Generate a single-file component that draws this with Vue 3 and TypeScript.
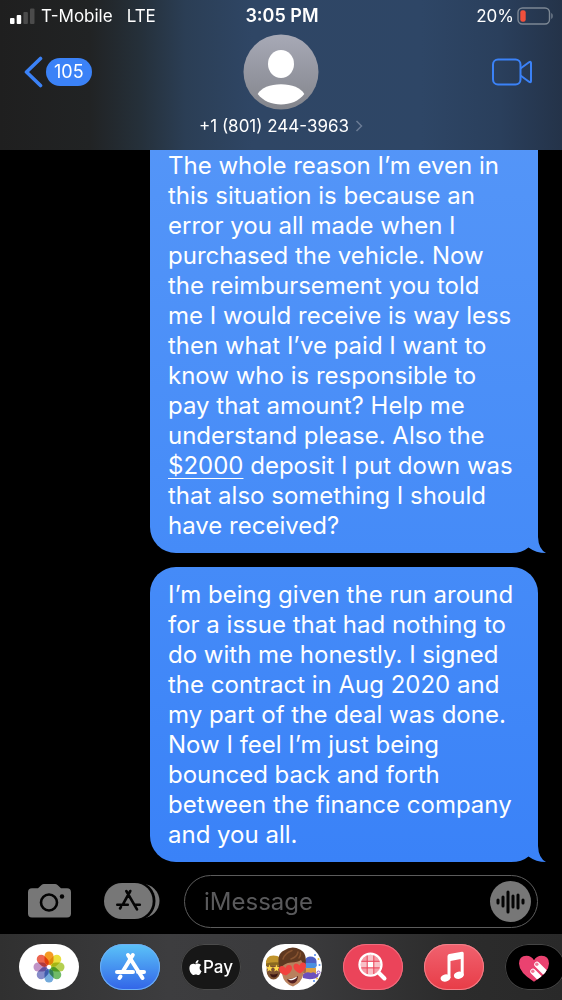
<script setup lang="ts">
import { ref } from 'vue'

interface Message {
  id: number
  before: string
  link?: string
  after?: string
}

const draft = ref('')

const messages: Message[] = [
  {
    id: 1,
    before:
      'The whole reason I’m even in\nthis situation is because an\nerror you all made when I\npurchased the vehicle. Now\nthe reimbursement you told\nme I would receive is way less\nthen what I’ve paid I want to\nknow who is responsible to\npay that amount? Help me\nunderstand please. Also the\n',
    link: '$2000',
    after: ' deposit I put down was\nthat also something I should\nhave received?',
  },
  {
    id: 2,
    before:
      'I’m being given the run around\nfor a issue that had nothing to\ndo with me honestly. I signed\nthe contract in Aug 2020 and\nmy part of the deal was done.\nNow I feel I’m just being\nbounced back and forth\nbetween the finance company\nand you all.',
  },
]

const petals = [
  { angle: 0, color: '#f59a23' },
  { angle: 45, color: '#ebdf3c' },
  { angle: 90, color: '#b4cf50' },
  { angle: 135, color: '#70bb68' },
  { angle: 180, color: '#73aadb' },
  { angle: 225, color: '#858bc9' },
  { angle: 270, color: '#c093c6' },
  { angle: 315, color: '#ec6550' },
]

const waveBars = [
  { x: 8, top: 19, bottom: 22 },
  { x: 13, top: 16, bottom: 25 },
  { x: 18, top: 11, bottom: 31 },
  { x: 23, top: 15, bottom: 26 },
  { x: 28, top: 14, bottom: 27 },
  { x: 33, top: 19, bottom: 22 },
]
</script>

<template>
  <div class="phone">
    <header class="top">
      <div class="status">
        <div class="carrier">
          <svg class="signal" width="25" height="16" viewBox="0 0 25 16" aria-hidden="true">
            <rect x="0" y="10" width="4.5" height="6" rx="1" fill="#fff" />
            <rect x="6.7" y="7" width="4.5" height="9" rx="1" fill="#fff" />
            <rect x="13.4" y="4" width="4.5" height="12" rx="1" fill="#4b4b4b" />
            <rect x="20" y="0.5" width="4.5" height="15.5" rx="1" fill="#4b4b4b" />
          </svg>
          <span>T-Mobile</span>
          <span class="network">LTE</span>
        </div>
        <span class="clock">3:05 PM</span>
        <div class="power">
          <span>20%</span>
          <svg width="37" height="18" viewBox="0 0 37 18" aria-hidden="true">
            <rect x="1" y="1" width="31.5" height="16" rx="4.5" fill="none" stroke="#7c8794" stroke-width="1.4" />
            <rect x="3.3" y="3.2" width="5.4" height="11.6" rx="2.2" fill="#f0503c" />
            <path d="M34.3 6v6c1.8-.6 1.8-5.4 0-6z" fill="#7c8794" />
          </svg>
        </div>
      </div>
      <nav class="nav">
        <button class="back" type="button" aria-label="Back, 105 unread">
          <svg width="20" height="32" viewBox="0 0 20 32" aria-hidden="true">
            <path d="M16.5 2.500 2.500 16l14 13.500" fill="none" stroke="#3b82f7" stroke-width="3.600" stroke-linecap="round" stroke-linejoin="round" />
          </svg>
          <span class="badge">105</span>
        </button>
        <button class="contact" type="button">
          <svg width="76" height="76" viewBox="0 0 76 76" aria-hidden="true">
            <defs>
              <linearGradient id="avatar-fill" x1="0" y1="0" x2="0" y2="1">
                <stop offset="0" stop-color="#a7a9b6" />
                <stop offset="1" stop-color="#83858c" />
              </linearGradient>
            </defs>
            <circle cx="38" cy="38" r="37.500" fill="url(#avatar-fill)" />
            <ellipse cx="38" cy="30" rx="13" ry="14" fill="#fff" />
            <path d="M14.700 60C18 54 27 50.300 38 50.300S58 54 61.300 60C56 67 47 70.500 38 70.500S20 67 14.700 60z" fill="#fff" />
          </svg>
          <span class="number">
            +1 (801) 244-3963
            <svg width="8" height="12" viewBox="0 0 8 12" aria-hidden="true">
              <path d="M1.500 1l5 5-5 5" fill="none" stroke="#6b7c95" stroke-width="1.500" />
            </svg>
          </span>
        </button>
        <button class="video" type="button" aria-label="Video call">
          <svg width="42" height="28" viewBox="0 0 42 28" fill="none" stroke="#3b82f7" stroke-width="2" stroke-linejoin="round" aria-hidden="true">
            <rect x="1" y="1.500" width="27.500" height="25" rx="5" />
            <path d="M28.500 10.500 37 4.300Q39 3 39 5v18q0 2-2 .700l-8.500-6.200" />
          </svg>
        </button>
      </nav>
    </header>

    <main class="thread">
      <article v-for="message in messages" :key="message.id" class="bubble">
        <p>{{ message.before }}<a v-if="message.link" href="#payment">{{ message.link }}</a>{{ message.after }}</p>
        <svg class="tail" width="36" height="16" viewBox="0 0 36 16" aria-hidden="true">
          <path d="M27 0Q27.500 12 35 16H27z" class="tail-fill" />
          <path d="M0 16Q11 16 17.500 10.500 25 16 35 16z" fill="#000" />
        </svg>
      </article>
    </main>

    <form class="composer" @submit.prevent>
      <button type="button" class="camera" aria-label="Camera">
        <svg width="44" height="34" viewBox="0 0 44 34" aria-hidden="true">
          <path d="M4 4.300h6L13.500 1Q14.500 0 16 0h11q1.500 0 2.500 1L33 4.300h6q4 0 4 4V29.500q0 4-4 4H4q-4 0-4-4V8.300q0-4 4-4z" fill="#777" />
          <circle cx="21" cy="18.500" r="8" fill="none" stroke="#030303" stroke-width="2.600" />
          <circle cx="34" cy="12.500" r="2.200" fill="#030303" />
        </svg>
      </button>
      <button type="button" class="apps" aria-label="Apps">
        <svg width="57" height="36" viewBox="0 0 57 36" aria-hidden="true">
          <rect x="7" y="1" width="48.500" height="34" rx="17" fill="#777" />
          <rect x="-2" y="-2" width="53.500" height="40" rx="20" fill="#020202" />
          <rect x="0" y="0" width="48.700" height="36" rx="18" fill="#777" />
          <g stroke="#050505" stroke-width="2.600" stroke-linecap="round">
            <path d="M22.300 8 33 26.300M26.300 8l-7 12.700M17 23.800l-1 1.700M13.300 21.700h10.500M31 21.700h4.800" />
          </g>
        </svg>
      </button>
      <div class="field">
        <input v-model="draft" type="text" placeholder="iMessage" aria-label="iMessage" />
        <button type="button" class="record" aria-label="Record audio">
          <svg width="41" height="41" viewBox="0 0 41 41" aria-hidden="true">
            <circle cx="20.500" cy="20.500" r="20.500" fill="#777" />
            <path v-for="bar in waveBars" :key="bar.x" :d="`M${bar.x} ${bar.top}V${bar.bottom}`" stroke="#050505" stroke-width="3" stroke-linecap="round" />
          </svg>
        </button>
      </div>
    </form>

    <footer class="drawer">
      <button type="button" class="pill photos" aria-label="Photos">
        <svg viewBox="0 0 60 46" aria-hidden="true">
          <g class="petals">
            <rect v-for="petal in petals" :key="petal.angle" x="25.500" y="7.500" width="9" height="13.500" rx="4.500" :fill="petal.color" :transform="`rotate(${petal.angle} 30 23)`" />
          </g>
        </svg>
      </button>
      <button type="button" class="pill store" aria-label="App Store">
        <svg viewBox="0 0 60 46" aria-hidden="true">
          <g stroke="#fff" stroke-width="4" stroke-linecap="round">
            <path d="M28 11 42.500 34M32.800 11 22.500 28M20.500 32.500l-1 1.500M17 28h16M38 28h6" />
          </g>
        </svg>
      </button>
      <button type="button" class="pill pay" aria-label="Apple Pay">
        <svg class="apple" width="13" height="15" viewBox="2 0 20 24" fill="#fff" aria-hidden="true">
          <path d="M12.152 6.896c-.948 0-2.415-1.078-3.960-1.040-2.040.027-3.910 1.183-4.961 3.014-2.117 3.675-.546 9.103 1.519 12.090 1.013 1.454 2.208 3.090 3.792 3.039 1.520-.065 2.090-.987 3.935-.987 1.831 0 2.350.987 3.960.948 1.637-.026 2.676-1.480 3.676-2.948 1.156-1.688 1.636-3.325 1.662-3.415-.039-.013-3.182-1.221-3.220-4.857-.026-3.040 2.480-4.494 2.597-4.559-1.429-2.090-3.623-2.324-4.390-2.376-2-.156-3.675 1.090-4.610 1.090zM15.530 3.830c.843-1.012 1.400-2.427 1.245-3.830-1.207.052-2.662.805-3.532 1.818-.780.896-1.454 2.338-1.273 3.714 1.338.104 2.715-.688 3.559-1.701" />
        </svg>
        <span>Pay</span>
      </button>
      <button type="button" class="pill memoji" aria-label="Memoji stickers">
        <svg viewBox="0 0 60 46" aria-hidden="true">
          <ellipse cx="11.500" cy="26" rx="7" ry="9.500" fill="#7b5132" />
          <path d="M4 21Q3 11.500 11.500 11.500T20 19v3z" fill="#c0942c" />
          <path d="M4 19.500q7-2 15-1v3q-8-1-15 1z" fill="#8a6920" />
          <path d="m7.500 20.500 1 2.500 2.500.3-2 1.700.6 2.500-2.100-1.300-2.200 1.300.6-2.500-2-1.700 2.600-.3zM14.500 20.500l1 2.500 2.500.3-2 1.700.6 2.500-2.100-1.300-2.200 1.300.6-2.500-2-1.700 2.600-.3z" fill="#ffd94a" />
          <path d="M8 30q4 1 8-.5-1 4-4 4t-4-3.500z" fill="#3b1713" />
          <path d="M43 17q0-4 5-4.500 6 0 6.500 4.500v5H43z" fill="#4d5fc4" />
          <rect x="42" y="19" width="12.500" height="5" rx="2" fill="#4a90e0" />
          <path d="M43 24h11v7H43z" fill="#dda040" />
          <path d="M41 30q4-3 8-1 3-2 5 1 2 1 2.500-1.500 1 5-3.500 6-6 1.500-12-.5z" fill="#6c50bd" />
          <circle cx="56.500" cy="28.500" r="1.500" fill="none" stroke="#8a57c7" />
          <g fill="#4b89eb">
            <circle cx="53" cy="11" r="1" />
            <circle cx="57.500" cy="21" r="1" />
            <circle cx="52" cy="37" r="1" />
          </g>
          <g fill="#f5ca3d">
            <circle cx="56.500" cy="15" r="1" />
            <circle cx="55" cy="34.500" r="1" />
          </g>
          <ellipse cx="19.500" cy="26" rx="2" ry="3.500" fill="#a5694a" />
          <ellipse cx="42" cy="26" rx="2" ry="3.500" fill="#a5694a" />
          <path d="M20 15h21.500v15q-2 9-10.500 12.500Q22 40 20 30z" fill="#b9805d" />
          <path d="M17.500 24Q14 10 22 6.500 30 1 38 5.500q8 4 5 17.500h-1.500q0-4-2.500-7-3 2-10 2.500-7 .5-10 5.500z" fill="#5f3820" />
          <path d="M21 15q2-6 9-8.500M29 15q6-2 7-7M37 14q2-2 1.500-5" fill="none" stroke="#85522f" stroke-width="1.500" stroke-linecap="round" />
          <path d="M24 31.500q-6.500-1.800-7-6-.2-3.500 3-3.500 2 0 3.500 2 1-3.500 4-3 3.200.8 2.300 4.500-1 3.300-5.800 6zM38 29.500q-5.500-2.200-6.500-6.200-.3-3.300 2.500-3.800 2 0 3.500 2 1-3.300 4-3 3.300.9 2.300 4.500-1 3.300-5.800 6.500z" fill="#f2423f" />
          <path d="M25 35.500q6-.5 11-3.500-.5 7-5 7.500-4 0-6-4z" fill="#542021" />
          <path d="M26 35.600q5-.6 9-3-.5 2.500-4 3.400t-5-.4z" fill="#fff" />
        </svg>
      </button>
      <button type="button" class="pill images" aria-label="#images">
        <svg viewBox="0 0 60 46" aria-hidden="true">
          <defs><clipPath id="lens"><circle cx="27.500" cy="20.700" r="10" /></clipPath></defs>
          <g clip-path="url(#lens)">
            <rect x="17" y="10" width="21" height="22" fill="#f59aa5" />
            <path d="M24.500 10h6v7h-6zM17 17.500h7v6h-7zM31 17.500h7v6h-7zM24.500 24h6v8h-6z" fill="#f8c0c7" />
            <path d="M24.500 17.500h6v6h-6z" fill="#fff" />
            <path d="M24.200 10v22M30.800 10v22M17 17.300h21M17 23.900h21" stroke="#eb445a" stroke-width="1" />
          </g>
          <circle cx="27.500" cy="20.700" r="11" fill="none" stroke="#fff" stroke-width="2.300" />
          <path d="m36 29 5.500 5.500" stroke="#fff" stroke-width="4" stroke-linecap="round" />
        </svg>
      </button>
      <button type="button" class="pill music" aria-label="Music">
        <svg viewBox="0 0 60 46" fill="#fff" aria-hidden="true">
          <path d="M23.500 12.300q0-1.800 1.800-2.200L38 7.800q1.700-.3 1.700 1.500V31.500h-3V15l-10.200 2V34h-3z" />
          <ellipse cx="21.500" cy="34" rx="5" ry="3.600" transform="rotate(-12 21.500 34)" />
          <ellipse cx="34.800" cy="31.300" rx="5" ry="3.600" transform="rotate(-12 34.800 31.300)" />
        </svg>
      </button>
      <button type="button" class="pill touch" aria-label="Digital Touch">
        <svg viewBox="0 0 60 46" aria-hidden="true">
          <defs>
            <clipPath id="heart"><path d="M29 37.700Q14 28.500 14 19.500 14 11.700 21.500 11.700q5 0 7.500 4.500 2.500-4.500 7.500-4.500 7.500 0 7.500 7.800 0 9-15 18.200z" /></clipPath>
          </defs>
          <g clip-path="url(#heart)">
            <rect x="12" y="10" width="34" height="30" fill="#ea4270" />
            <path d="m32 20.500 14 14M28 27.500l12 12" stroke="#fff" stroke-width="5.500" stroke-linecap="round" />
            <circle cx="31.800" cy="20.300" r="1.700" fill="#f17897" />
            <circle cx="27.800" cy="27.300" r="1.700" fill="#f17897" />
          </g>
        </svg>
      </button>
    </footer>
  </div>
</template>

<style>
body {
  margin: 0;
  background: #000;
}
</style>

<style scoped>
.phone {
  display: flex;
  flex-direction: column;
  height: 100vh;
  overflow: hidden;
  background: #000;
  color: #fff;
  font-family: Inter, "Liberation Sans", sans-serif;
}

button {
  padding: 0;
  border: 0;
  background: none;
  color: inherit;
  font: inherit;
}

svg {
  display: block;
}

.top {
  flex: none;
  height: 150px;
  background: linear-gradient(90deg, #1f1f1f 0%, #212324 16%, #25303a 25%, #2b3e55 33%, #2f4665 45%, #2e4666 75%, #2a3f5c 89%, #243349 100%);
}

.status {
  display: grid;
  grid-template-columns: 1fr auto 1fr;
  align-items: center;
  height: 32px;
  padding: 0 8px 0 10px;
  font-size: 17px;
  line-height: 20px;
}

.carrier,
.power {
  display: flex;
  align-items: center;
}

.signal {
  margin-right: 6px;
}

.network {
  margin-left: 14px;
}

.clock {
  font-size: 18px;
  font-weight: 600;
}

.power {
  justify-content: flex-end;
  gap: 3px;
}

.nav {
  display: grid;
  grid-template-columns: 1fr auto 1fr;
  align-items: start;
  padding: 2px 24px 0;
}

.back {
  display: flex;
  align-items: center;
  justify-self: start;
  gap: 2px;
  margin-top: 22px;
}

.badge {
  padding: 0 8px;
  border-radius: 14px;
  background: #3b82f7;
  font-size: 18px;
  line-height: 28px;
}

.contact {
  display: flex;
  flex-direction: column;
  align-items: center;
  gap: 6px;
}

.number {
  display: flex;
  align-items: center;
  gap: 6px;
  font-size: 17px;
  line-height: 20px;
}

.video {
  justify-self: end;
  margin: 24px 4px 0 0;
}

.thread {
  display: flex;
  flex: 1;
  flex-direction: column;
  justify-content: flex-end;
  gap: 14px;
  min-height: 0;
  padding: 0 24px;
  overflow: hidden;
}

.bubble {
  --shade: #3a82f8;
  position: relative;
  flex: none;
  align-self: flex-end;
  box-sizing: border-box;
  width: 388px;
  max-width: 100%;
  padding: 13px 18px 12px;
  border-radius: 26px 26px 0 26px;
  background: linear-gradient(#458bf8, var(--shade));
}

.bubble:first-child {
  --shade: #458bf8;
  padding-top: 40px;
  background: linear-gradient(#5596f8, var(--shade));
}

.bubble p {
  margin: 0;
  font-size: 24px;
  line-height: 30px;
  white-space: pre-line;
}

.bubble a {
  color: inherit;
  text-decoration-thickness: 1px;
  text-underline-offset: 4px;
}

.tail {
  position: absolute;
  right: -9px;
  bottom: 0;
}

.tail-fill {
  fill: var(--shade);
}

.composer {
  display: flex;
  flex: none;
  align-items: center;
  height: 72px;
  padding: 6px 24px 0 28px;
  box-sizing: border-box;
}

.apps {
  margin: 0 23px 0 32px;
}

.field {
  display: flex;
  flex: 1;
  align-items: center;
  box-sizing: border-box;
  height: 53px;
  min-width: 0;
  padding: 0 6px 0 19px;
  border: 1px solid #5c5c5c;
  border-radius: 27px;
}

.field input {
  flex: 1;
  min-width: 0;
  padding: 0;
  border: 0;
  outline: 0;
  background: none;
  color: #fff;
  font: inherit;
  font-size: 24px;
}

.field input::placeholder {
  color: #5a5a5c;
  opacity: 1;
}

.drawer {
  display: flex;
  flex: none;
  gap: 21px;
  height: 66px;
  padding: 10px 0 0 19px;
  box-sizing: border-box;
  overflow: hidden;
  background: linear-gradient(90deg, #303030, #3d3d3f 30%, #3a3a3c 55%, #2c2c2c 80%, #292929);
}

.pill {
  display: flex;
  flex: none;
  align-items: center;
  justify-content: center;
  width: 60px;
  height: 46px;
  border-radius: 23px;
  overflow: hidden;
}

.photos,
.memoji {
  background: #fff;
}

.petals rect {
  mix-blend-mode: multiply;
}

.store {
  background: linear-gradient(#5bc3f8, #3264e8);
  box-shadow: inset 0 0 0 1px #6eb0f3;
}

.pay {
  gap: 1px;
  background: #171717;
  box-shadow: inset 0 0 0 1px #4b4b4b;
  font-size: 17px;
  font-weight: 500;
}

.images {
  background: #eb445a;
  box-shadow: inset 0 0 0 1px #f06d7e;
}

.music {
  background: linear-gradient(#f0626f, #e83c47);
  box-shadow: inset 0 0 0 1px #f18089;
}

.touch {
  background: #000;
  box-shadow: inset 0 0 0 1px #444;
}
</style>
